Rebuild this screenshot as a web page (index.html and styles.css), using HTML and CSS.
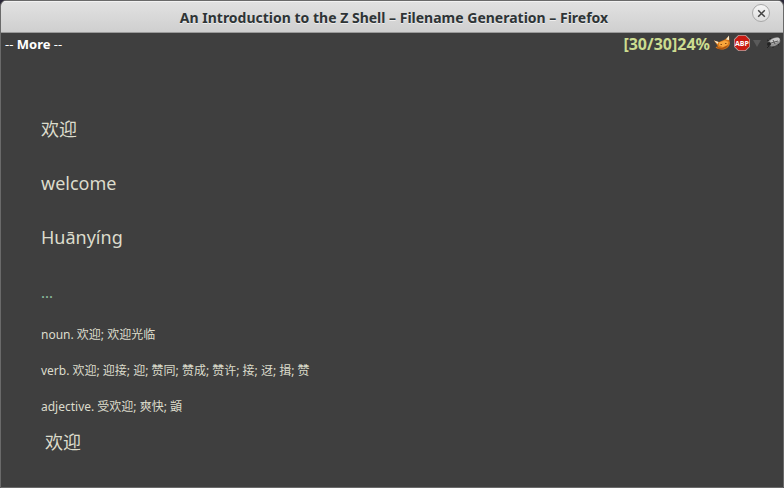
FILE: index.html
```html
<!DOCTYPE html>
<html lang="zh-CN">
<head>
<meta charset="utf-8">
<title>An Introduction to the Z Shell</title>
<link rel="stylesheet" href="styles.css">
</head>
<body>
<div class="window">
  <header class="titlebar">
    <span class="spacer"></span>
    <h1 class="title">An Introduction to the Z Shell – Filename Generation – Firefox</h1>
    <button class="close" type="button" aria-label="Close">
      <svg viewBox="0 0 9 9" width="9" height="9"><path d="M1.200 1.200 7.800 7.800M7.800 1.200 1.200 7.800"/></svg>
    </button>
  </header>
  <div class="status">
    <span class="more">-- <b>More</b> --</span>
    <span class="position">[30/30]24%</span>
    <svg class="icon" viewBox="0 0 18 18" width="18" height="18">
      <path fill="#d97a1c" d="M1 6.500 6 8 12 5.500 16 2 16.500 7 17 9C16.500 13 13 15.500 9 15.500 6 15.500 3 14.500 2.500 13L5 12.500z"/>
      <path fill="#f9a63c" d="M6 8.500 12 6.500 15.500 8 14.500 11 10 13 6 11.500z"/>
      <path fill="#f4ead0" d="M13 5.500 16 1.500 16 6zM1 6.500 5.500 8 4.500 10z"/>
      <path fill="#ad5510" d="M4 13 9 14 15.500 11 13 14 8.500 15.500 4.500 14.500z"/>
      <path fill="#8a4a14" d="M7.500 10h1.500v1H7.500zM12 9h1.500v1H12z"/>
    </svg>
    <svg class="icon" viewBox="0 0 18 18" width="18" height="18">
      <path fill="#b9a5a2" d="M5.300 1h7.400L17 5.300v7.400L12.700 17H5.300L1 12.700V5.300z"/>
      <path fill="#c81a12" d="M5.700 1.800h6.600l3.900 3.900v6.600l-3.900 3.900H5.700l-3.900-3.900V5.700z"/>
      <text class="abp" x="9" y="12" text-anchor="middle">ABP</text>
    </svg>
    <svg class="arrow" viewBox="0 0 8 8" width="8" height="8"><path fill="#5a5a5a" d="M0 1h8L4 8z"/></svg>
    <svg class="bug" viewBox="0 0 16 16" width="16" height="16">
      <path fill="none" stroke="#222" d="M4 6 2 5M4 11l-2 2M8 11v2M12 9l2 1M6 5 5 3"/>
      <ellipse cx="9" cy="7" rx="6.500" ry="4" transform="rotate(-20 9 7)" fill="#929292"/>
      <ellipse cx="10" cy="5.500" rx="5" ry="2.300" transform="rotate(-20 10 5.500)" fill="#c8c8c8"/>
      <circle cx="4" cy="9" r="2" fill="#222"/>
      <path stroke="#555" d="M6 8 13 6M8 5l2 4" fill="none"/>
    </svg>
  </div>
  <main class="content">
    <p class="large">欢迎</p>
    <p class="large">welcome</p>
    <p class="large">Huānyíng</p>
    <p class="large dots"><a class="link" href="#more">...</a></p>
    <p class="entry">noun. 欢迎; 欢迎光临</p>
    <p class="entry">verb. 欢迎; 迎接; 迎; 赞同; 赞成; 赞许; 接; 迓; 揖; 赞</p>
    <p class="entry">adjective. 受欢迎; 爽快; 顗</p>
    <p class="large result">欢迎</p>
  </main>
</div>
</body>
</html>
```

FILE: styles.css
```css
* {
  box-sizing: border-box;
}

body {
  margin: 0;
  background: #2b2838;
  font-family: "Noto Sans", "Noto Sans CJK SC", sans-serif;
}

.window {
  min-height: 100vh;
  border: 1px solid #6a6a6a;
  border-radius: 6px 6px 0 0;
  background: #3f3f3f;
  color: #dcdccc;
  overflow: hidden;
}

.titlebar {
  display: grid;
  grid-template-columns: 1fr auto 1fr;
  height: 32px;
  padding-left: 4px;
  border-bottom: 1px solid #9a9a9a;
  background: linear-gradient(#e2e2e2, #cfcfcf);
  box-shadow: inset 0 1px #f2f2f2;
}

.title {
  margin: 0;
  color: #2e3436;
  font-size: 14px;
  font-weight: 700;
  line-height: 34px;
  text-shadow: 0 1px #eee;
  white-space: nowrap;
}

.close {
  display: flex;
  align-items: center;
  justify-content: center;
  justify-self: end;
  width: 18px;
  height: 18px;
  margin: 3px 13px 0 0;
  padding: 0;
  border: 1px solid #a8a8a8;
  border-radius: 50%;
  background: linear-gradient(#f6f6f6, #dedede);
}

.close path {
  fill: none;
  stroke: #444;
  stroke-width: 1.500;
}

.status {
  display: flex;
  align-items: center;
  height: 21px;
  padding: 0 2px 0 4px;
  color: #fff;
}

.more {
  flex: 1;
  font-size: 13px;
}

.position {
  margin-right: 3px;
  color: #ccdc90;
  font-size: 16px;
  font-weight: 700;
  line-height: 20px;
}

.bug,
.icon,
.arrow {
  margin-bottom: 2px;
}

.icon {
  margin-right: 2px;
}

.abp {
  fill: #fff;
  font: 700 7px "Liberation Sans Narrow", "Open Sans", sans-serif;
}

.arrow {
  margin-right: 4px;
}

.content {
  padding: 62px 40px 20px;
}

.content p {
  margin: 0;
}

.large {
  font-size: 18px;
  line-height: 27px;
}

.content .large:not(.result) {
  margin-bottom: 27px;
}

.content .large.dots {
  margin-bottom: 20px;
}

.entry {
  font-size: 12px;
  line-height: 18px;
}

.content .entry {
  margin-bottom: 18px;
}

.content .result {
  margin-top: -5px;
  padding-left: 4px;
}

.link {
  color: #8fc0a0;
  font-size: 15px;
  text-decoration: none;
}
```
